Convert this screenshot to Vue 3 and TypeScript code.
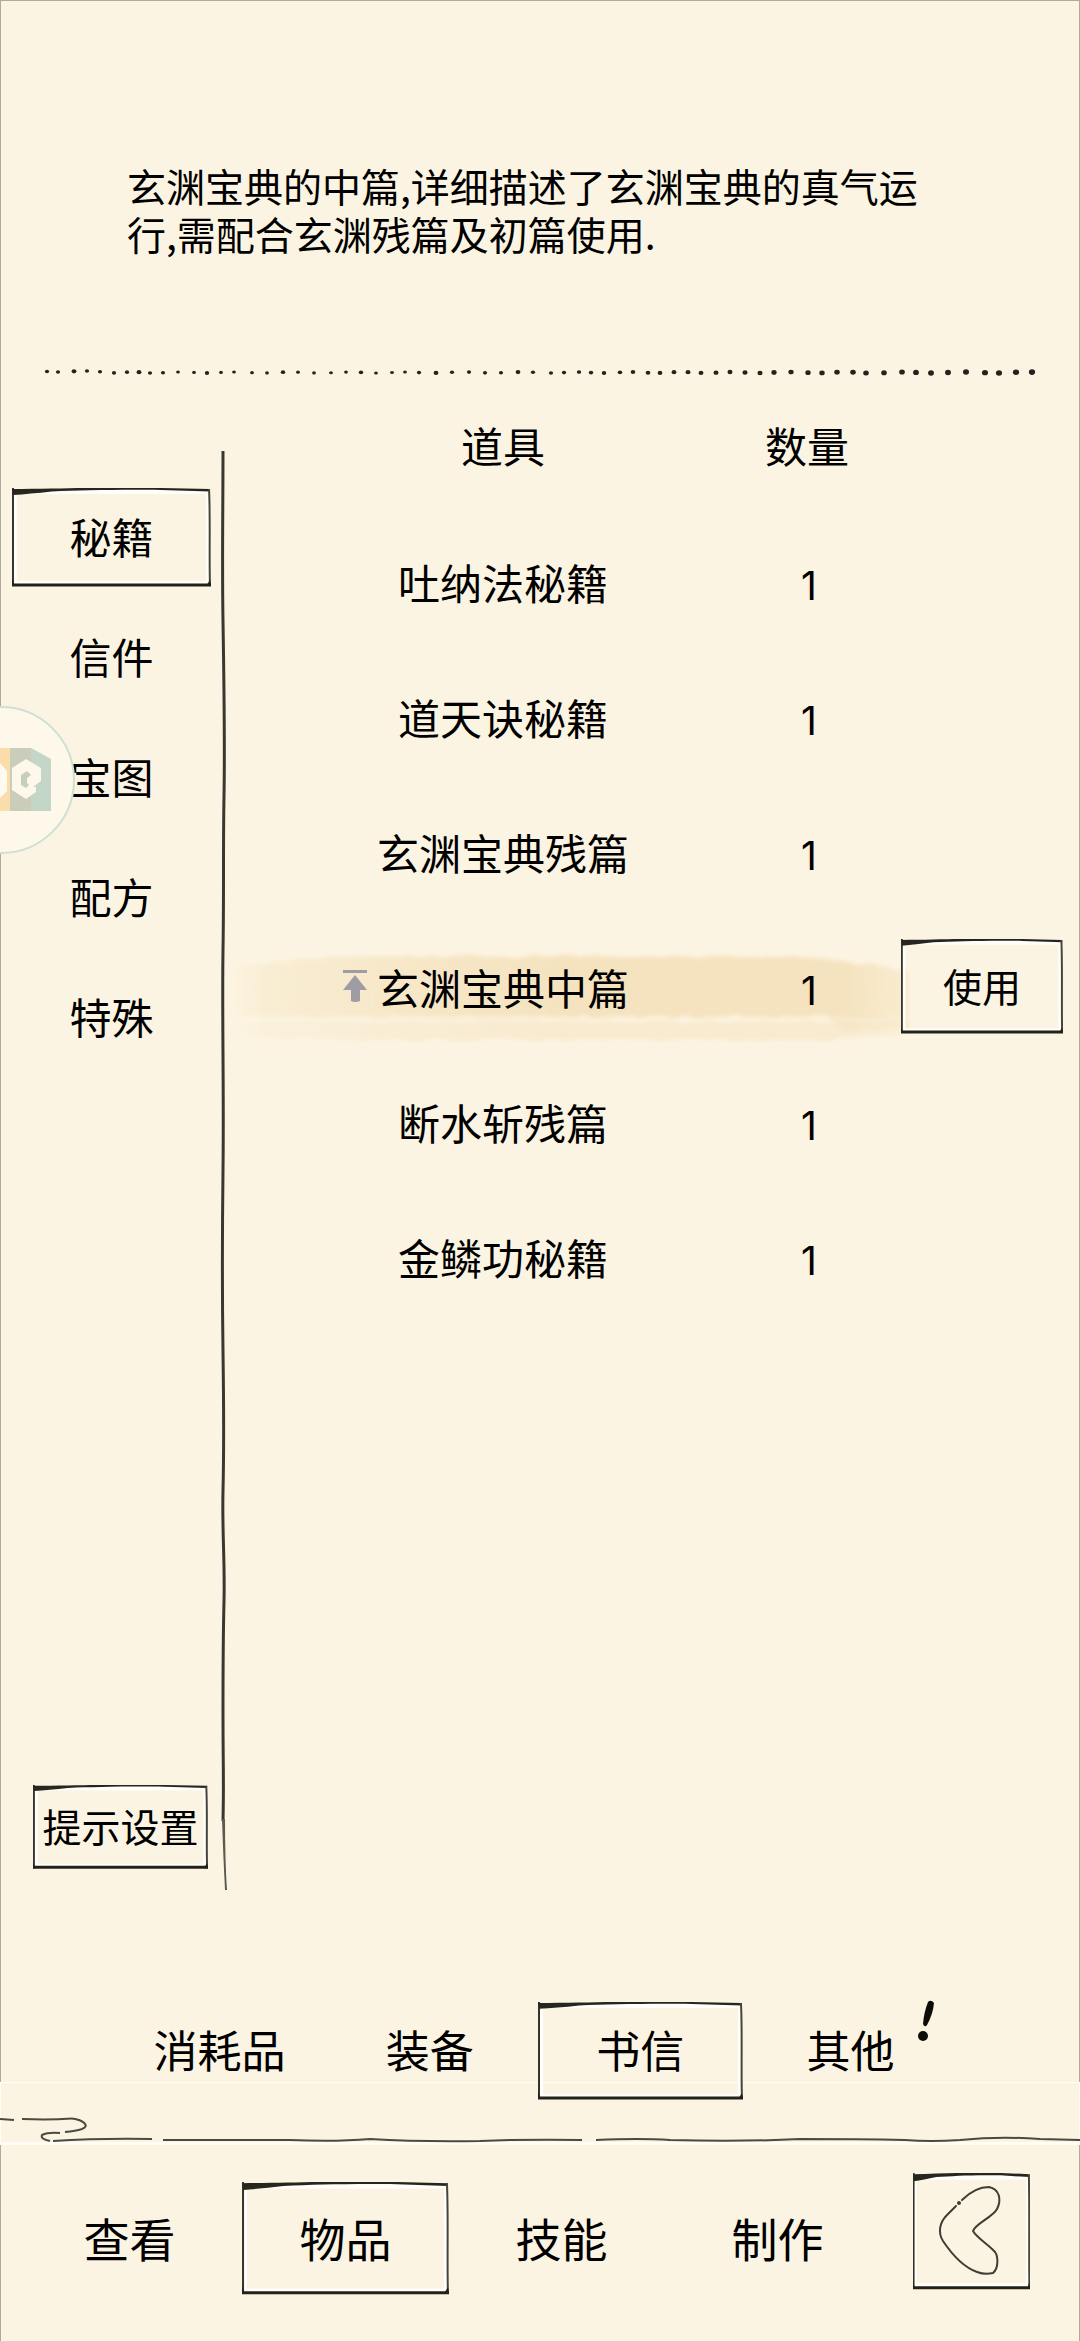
<script setup lang="ts">
import { ref } from 'vue'

interface Item {
  name: string
  count: number
}

interface Dot {
  x: number
  y: number
  r: number
}

const categories: string[] = ['秘籍', '信件', '宝图', '配方', '特殊']
const filters: string[] = ['消耗品', '装备', '书信', '其他']
const sections: string[] = ['查看', '物品', '技能', '制作']

const items: Item[] = [
  { name: '吐纳法秘籍', count: 1 },
  { name: '道天诀秘籍', count: 1 },
  { name: '玄渊宝典残篇', count: 1 },
  { name: '玄渊宝典中篇', count: 1 },
  { name: '断水斩残篇', count: 1 },
  { name: '金鳞功秘籍', count: 1 },
]

const category = ref('秘籍')
const filter = ref('书信')
const section = ref('物品')
const selected = ref('玄渊宝典中篇')

const dotXs: number[] = [
  47, 58, 74, 87, 100, 114, 127, 139, 150, 163, 178, 194, 207, 221, 234, 252, 267, 283, 298, 314, 331, 346,
  361, 376, 392, 405, 419, 436, 452, 469, 485, 501, 518, 533, 551, 564, 579, 591, 604, 620, 633, 648, 660,
  674, 688, 701, 716, 730, 745, 760, 774, 791, 808, 822, 837, 853, 866, 884, 902, 916, 931, 948, 966, 985,
  999, 1016, 1032,
]

// The dots grow from left to right and wander a little around the line.
const dots: Dot[] = dotXs.map((x, i) => ({
  x,
  y: 12.5 + Math.sin(i * 1.7) * 0.5 - (i < 5 ? 1 : 0),
  r: i < 34 ? 1.8 + (i % 5 === 2 ? 0.3 : 0) - (i > 9 && i < 26 ? 0.2 : 0) : 1.8 + (i - 34) * 0.032,
}))
</script>

<template>
  <div class="page">
    <svg class="defs" aria-hidden="true">
      <symbol id="ink-frame" viewBox="0 0 200 100" preserveAspectRatio="none">
        <rect x="3" y="4" width="194" height="92" fill="none" stroke="#fffefa" stroke-width="4" vector-effect="non-scaling-stroke" />
        <path d="M1 0V99" fill="none" stroke="#34342c" stroke-width="2" vector-effect="non-scaling-stroke" />
        <path d="M0 1C60 0.500 100 -1 150 0L199 1V3.500L150 2C100 1.500 70 2.500 40 3.500Q18 6 1 7Z" fill="#26261f" />
        <path d="M198 1C199.500 30 198 70 199 99" fill="none" stroke="#45453c" stroke-width="2" vector-effect="non-scaling-stroke" />
        <path d="M0 98H200" fill="none" stroke="#22221b" stroke-width="3" vector-effect="non-scaling-stroke" />
        <path d="M0 92L3 99H0ZM199 93L195 99H200Z" fill="#22221b" />
      </symbol>
    </svg>

    <header class="description">
      <p>玄渊宝典的中篇,详细描述了玄渊宝典的真气运行,需配合玄渊残篇及初篇使用.</p>
    </header>

    <svg class="dots" viewBox="0 0 1080 24" preserveAspectRatio="none" aria-hidden="true">
      <ellipse v-for="d in dots" :key="d.x" :cx="d.x" :cy="d.y" :rx="d.r + 0.3" :ry="d.r" fill="#23221c" />
    </svg>

    <main class="content">
      <aside class="sidebar">
        <nav class="categories">
          <button
            v-for="c in categories"
            :key="c"
            type="button"
            class="btn category"
            @click="category = c"
          >
            <svg v-if="c === category" class="ink"><use href="#ink-frame" /></svg>
            <span>{{ c }}</span>
          </button>
        </nav>
        <button type="button" class="btn tips">
          <svg class="ink"><use href="#ink-frame" /></svg>
          <span>提示设置</span>
        </button>
      </aside>

      <svg class="rule" viewBox="0 0 10 1440" preserveAspectRatio="none" aria-hidden="true">
        <path
          d="M4 0C4 60 3 110 4 170S6 290 5 345S5 440 4 500S5 640 4 720S3 830 4 900S5 1000 4 1040S6 1110 5 1150S4 1200 4 1260S5 1330 4 1370"
          fill="none"
          stroke="#38382f"
          stroke-width="3"
        />
        <path d="M3 1368H6Q6 1410 8 1439L6 1439Q4 1400 3 1368Z" fill="#5a5a50" />
      </svg>

      <table class="items">
        <thead>
          <tr>
            <th scope="col" class="name">道具</th>
            <th scope="col" class="count">数量</th>
            <td class="action"></td>
          </tr>
        </thead>
        <tbody>
          <tr v-for="item in items" :key="item.name" @click="selected = item.name">
            <td class="name">
              <svg
                v-if="item.name === selected"
                class="brush"
                viewBox="0 0 684 100"
                preserveAspectRatio="none"
                aria-hidden="true"
              >
                <defs>
                  <linearGradient id="wash" gradientUnits="userSpaceOnUse" x1="0" x2="684" y1="0" y2="0">
                    <stop offset="0" stop-color="#f5e3bf" stop-opacity="0" />
                    <stop offset="0.05" stop-color="#f5e3bf" stop-opacity="0.4" />
                    <stop offset="0.25" stop-color="#f5e3bf" stop-opacity="0.75" />
                    <stop offset="0.5" stop-color="#f5e3bf" />
                    <stop offset="0.9" stop-color="#f5e3bf" />
                    <stop offset="1" stop-color="#f5e3bf" stop-opacity="0.5" />
                  </linearGradient>
                  <filter id="rough" x="-2%" y="-10%" width="104%" height="120%">
                    <feTurbulence type="fractalNoise" baseFrequency="0.05 0.12" numOctaves="2" seed="4" />
                    <feDisplacementMap in="SourceGraphic" scale="7" xChannelSelector="A" yChannelSelector="G" />
                    <feGaussianBlur stdDeviation="2" />
                  </filter>
                </defs>
                <g filter="url(#rough)" fill="url(#wash)">
                  <path d="M4 24Q60 16 130 15H560Q640 18 684 32V74H4Z" />
                  <path d="M4 78H684V88Q640 98 560 96H120Q50 95 4 90Z" opacity="0.55" />
                  <path d="M600 72H684V86H620Z" opacity="0.6" />
                </g>
              </svg>
              <span class="label">
                <svg v-if="item.name === selected" class="pin" viewBox="0 0 24 32" aria-hidden="true">
                  <path d="M0 0H24V3H0ZM12 5L24 20H17V31Q12 33 8 31V20H0Z" fill="#9d9da3" />
                </svg>
                {{ item.name }}
              </span>
            </td>
            <td class="count"><span class="label">{{ item.count }}</span></td>
            <td class="action">
              <button v-if="item.name === selected" type="button" class="btn use">
                <svg class="ink"><use href="#ink-frame" /></svg>
                <span>使用</span>
              </button>
            </td>
          </tr>
        </tbody>
      </table>
    </main>

    <section class="filters">
      <nav class="filter-list">
        <button v-for="f in filters" :key="f" type="button" class="btn filter" @click="filter = f">
          <svg v-if="f === filter" class="ink"><use href="#ink-frame" /></svg>
          <span>{{ f }}</span>
          <svg v-if="f === '其他'" class="alert" viewBox="0 0 16 42" aria-hidden="true">
            <path d="M10 2Q13 -1 16 3Q15 14 9 25Q7 28 5 24Q6 12 10 2Z" fill="#0c0c09" />
            <ellipse cx="5" cy="36" rx="5" ry="5" fill="#0c0c09" />
          </svg>
        </button>
      </nav>
      <svg class="cloud" viewBox="0 0 1080 32" preserveAspectRatio="none" aria-hidden="true">
        <g fill="none" stroke="#4a4a40" stroke-width="2">
          <path d="M0 6L14 7M22 6Q50 7 72 5.500" />
          <path d="M72 5.500C84 7 90 13 82 16Q76 18 65 19" />
          <path d="M60 20Q48 19 42 22Q40 26 50 28" />
          <path d="M53 28Q100 25 152 26" />
          <path d="M163 27H290Q335 29 370 26Q420 29 480 28Q530 26 582 27" />
          <path d="M596 27Q640 25 670 27Q740 29 800 26Q860 26 905 27Q930 29 960 27Q1000 23 1040 26L1080 27" />
        </g>
      </svg>
    </section>

    <footer class="sections">
      <nav class="section-list">
        <button v-for="s in sections" :key="s" type="button" class="btn section" @click="section = s">
          <svg v-if="s === section" class="ink"><use href="#ink-frame" /></svg>
          <span>{{ s }}</span>
        </button>
      </nav>
      <button type="button" class="btn back" aria-label="返回">
        <svg class="ink"><use href="#ink-frame" /></svg>
        <svg class="arrow" viewBox="0 0 117 117" aria-hidden="true">
          <path
            d="M43 33L34 42C26 50 25 60 30 68C38 80 50 94 64 99Q72 102 80 100C86 95 85 83 82 79C76 72 64 65 60 58C62 51 80 44 84 36C89 26 86 16 76 14C64 14 56 20 49 27"
            fill="none"
            stroke="#3e3e35"
            stroke-width="2"
            stroke-linecap="round"
          />
          <circle cx="46" cy="30" r="2" fill="#3e3e35" />
        </svg>
      </button>
    </footer>

    <button type="button" class="floating" aria-label="悬浮球">
      <svg viewBox="0 0 76 150" aria-hidden="true">
        <circle cx="1" cy="75" r="73" fill="#fdf8ea" stroke="#cfe0d3" stroke-width="2" />
        <path d="M0 43H10V106H0Z" fill="#fbdcab" />
        <path d="M0 58L7 66V86L0 93Z" fill="#fffaf0" />
        <path d="M10 43H31L51 54V106H10Z" fill="#c3d6c7" />
        <path d="M10 43H31V106H10Z" fill="#c9cdb9" />
        <path d="M26 54L41 63V76L33 82H36V87L26 94L12 85V63Z" fill="#fdf8ea" />
        <path d="M31 70L27 66L21 70V80L26 83L29 80L27 78V73Z" fill="#c6cfbd" />
      </svg>
    </button>
  </div>
</template>

<style>
body {
  margin: 0;
  background: #fcf4e2;
}
</style>

<style scoped>
.page {
  position: relative;
  display: flex;
  flex-direction: column;
  min-height: 100vh;
  background: #fcf4e2;
  box-shadow: inset 0 0 0 1px #aeab9c;
  color: #000;
  font-family: 'Noto Sans CJK SC', sans-serif;
  overflow: hidden;
}

.defs {
  position: absolute;
  width: 0;
  height: 0;
}

.btn {
  position: relative;
  display: flex;
  align-items: center;
  justify-content: center;
  flex: none;
  box-sizing: border-box;
  margin: 0;
  padding: 0 0 4px;
  border: 0;
  background: none;
  color: inherit;
  font-family: inherit;
  line-height: 60px;
  white-space: nowrap;
  cursor: pointer;
}

.btn span {
  position: relative;
}

.ink {
  position: absolute;
  inset: 0;
  width: 100%;
  height: 100%;
  overflow: visible;
}

.description {
  box-sizing: border-box;
  min-height: 360px;
  padding: 161px 150px 0 127px;
}

.description p {
  margin: 0;
  font-size: 39px;
  line-height: 48px;
  word-break: break-all;
}

.dots {
  display: block;
  width: 100%;
  height: 24px;
}

.content {
  display: flex;
  flex: 1;
}

.sidebar {
  display: flex;
  flex-direction: column;
  justify-content: space-between;
  box-sizing: border-box;
  flex: none;
  width: 219px;
  padding: 104px 8px 22px 12px;
}

.categories {
  display: flex;
  flex-direction: column;
  gap: 21px;
}

.category {
  width: 100%;
  height: 99px;
  font-size: 42px;
}

.tips {
  width: 175px;
  height: 84px;
  margin-left: 21px;
  font-size: 39px;
}

.rule {
  flex: none;
  width: 10px;
  height: auto;
  margin: 67px 0 0;
}

.items {
  flex: 1;
  align-self: flex-start;
  border-collapse: collapse;
  table-layout: fixed;
  font-size: 42px;
  line-height: 60px;
  text-align: center;
}

.items th,
.items td {
  height: 135px;
  padding: 0;
  font-weight: 400;
}

.items thead th,
.items thead td {
  height: 122px;
  padding-bottom: 8px;
}

.items tr {
  position: relative;
}

.items .name {
  padding-left: 60px;
}

.items .count {
  width: 180px;
}

.items tbody .count {
  box-sizing: border-box;
  padding: 8px 0 0 4px;
  font-family: Inter, sans-serif;
  font-size: 39px;
}

.items .action {
  width: 183px;
}

.label {
  position: relative;
}

.brush {
  position: absolute;
  left: 0;
  top: 22px;
  width: calc(100% - 170px);
  height: 103px;
}

.pin {
  position: absolute;
  right: 100%;
  top: 14px;
  width: 24px;
  height: 32px;
  margin-right: 10px;
}

.use {
  width: 162px;
  height: 95px;
  margin-left: 4px;
  font-size: 39px;
}

.filters {
  position: relative;
  padding-top: 111px;
}

.filters::before {
  content: '';
  position: absolute;
  inset: auto 0 0;
  height: 59px;
  border: 1px solid #fffdf6;
  border-bottom-width: 3px;
}

.filter-list {
  display: flex;
  justify-content: space-between;
  padding: 0 127px 0 117px;
}

.filter {
  width: 205px;
  height: 98px;
  font-size: 44px;
}

.alert {
  position: absolute;
  right: 19px;
  top: -2px;
  width: 16px;
  height: 42px;
}

.cloud {
  position: relative;
  display: block;
  width: 100%;
  height: 32px;
  margin-top: 13px;
}

.sections {
  display: flex;
  align-items: flex-start;
  padding: 28px 50px 47px 26px;
}

.section-list {
  display: flex;
  flex: 1;
  justify-content: space-between;
  padding: 9px 32px 0 0;
}

.section {
  width: 207px;
  height: 113px;
  font-size: 46px;
}

.back {
  width: 117px;
  height: 117px;
  padding: 0;
}

.arrow {
  position: relative;
  width: 100%;
  height: 100%;
}

.floating {
  position: absolute;
  left: 0;
  top: 705px;
  width: 76px;
  height: 150px;
  padding: 0;
  border: 0;
  background: none;
}

.floating svg {
  display: block;
  width: 100%;
  height: 100%;
}
</style>
